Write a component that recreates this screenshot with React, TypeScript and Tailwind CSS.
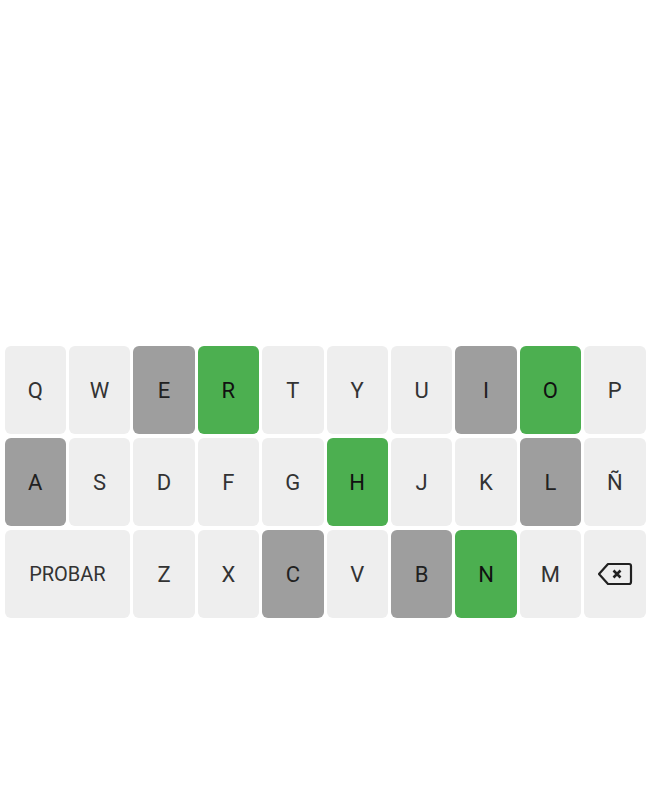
const rows = [
  ["Q", "W", "E", "R", "T", "Y", "U", "I", "O", "P"],
  ["A", "S", "D", "F", "G", "H", "J", "K", "L", "Ñ"],
  ["PROBAR", "Z", "X", "C", "V", "B", "N", "M", "DEL"],
];

const absent = ["E", "I", "A", "L", "C", "B"];
const correct = ["R", "O", "H", "N"];

function BackspaceIcon() {
  return (
    <svg width="36" height="24" viewBox="0 0 36 24" fill="none" stroke="#212121" strokeWidth="2.2">
      <path d="M11 2H32Q34 2 34 4V20Q34 22 32 22H11L2 12Z" strokeLinejoin="round" />
      <path d="M16.5 8.5L23.5 15.5M23.5 8.5L16.5 15.5" strokeWidth="2.6" />
    </svg>
  );
}

function Key({ label }: { label: string }) {
  let color = "bg-[#eeeeee] text-[#333333]";
  if (absent.includes(label)) color = "bg-[#9e9e9e] text-[#212121]";
  if (correct.includes(label)) color = "bg-[#4caf50] text-[#111111]";

  return (
    <button
      className={`flex h-[88px] items-center justify-center rounded-md ${color} ${
        label === "PROBAR" ? "col-span-2 text-xl" : "text-[22px]"
      }`}
    >
      {label === "DEL" ? <BackspaceIcon /> : label}
    </button>
  );
}

export default function App() {
  return (
    <div className="h-[800px] bg-white pt-[346px] font-['Roboto',sans-serif]">
      <div className="grid grid-cols-10 gap-x-[3px] gap-y-1 px-[4.5px]">
        {rows.flat().map((label) => (
          <Key key={label} label={label} />
        ))}
      </div>
    </div>
  );
}
